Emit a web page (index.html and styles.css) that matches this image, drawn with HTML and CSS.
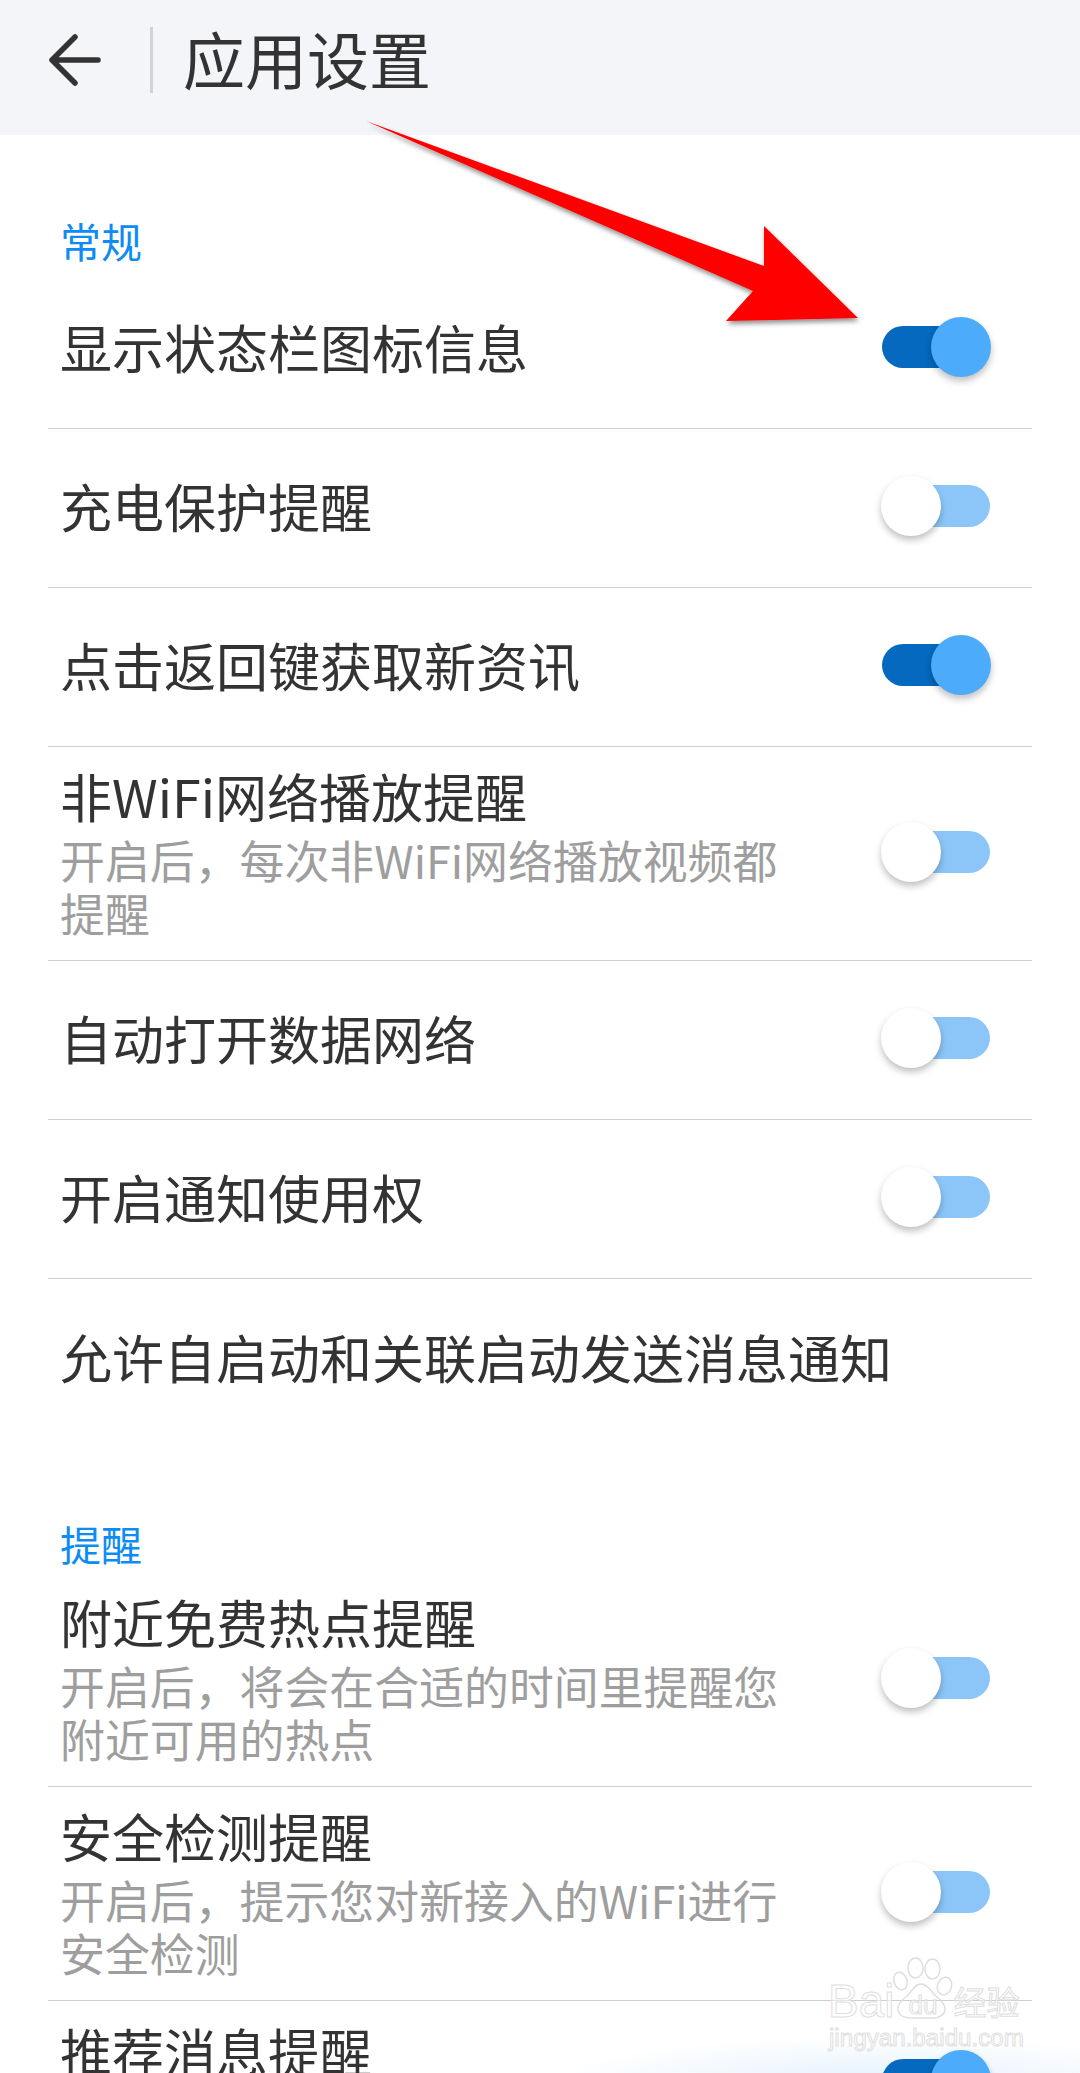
FILE: index.html
```html
<!DOCTYPE html>
<html lang="zh-CN">
<head>
    <meta charset="UTF-8">
    <meta name="viewport" content="width=device-width, initial-scale=1.0">
    <title>应用设置</title>
    <link rel="stylesheet" href="styles.css">
</head>
<body>
    <header class="app-bar">
        <svg class="back-icon" width="52" height="54" viewBox="0 0 52 54">
            <path d="M49 27H4M26 4L3 27L26 50" fill="none" stroke="#333" stroke-width="5.5" stroke-linecap="round" stroke-linejoin="round"/>
        </svg>
        <span class="app-bar-divider"></span>
        <h1 class="app-bar-title">应用设置</h1>
    </header>

    <main class="settings">
        <h2 class="section-label">常规</h2>
        <div class="row">
            <div class="row-text"><div class="row-title">显示状态栏图标信息</div></div>
            <span class="toggle on"></span>
        </div>
        <div class="row">
            <div class="row-text"><div class="row-title">充电保护提醒</div></div>
            <span class="toggle"></span>
        </div>
        <div class="row">
            <div class="row-text"><div class="row-title">点击返回键获取新资讯</div></div>
            <span class="toggle on"></span>
        </div>
        <div class="row row-tall">
            <div class="row-text">
                <div class="row-title">非WiFi网络播放提醒</div>
                <div class="row-sub">开启后，每次非WiFi网络播放视频都提醒</div>
            </div>
            <span class="toggle"></span>
        </div>
        <div class="row">
            <div class="row-text"><div class="row-title">自动打开数据网络</div></div>
            <span class="toggle"></span>
        </div>
        <div class="row">
            <div class="row-text"><div class="row-title">开启通知使用权</div></div>
            <span class="toggle"></span>
        </div>
        <div class="row row-last">
            <div class="row-text row-text-wide"><div class="row-title">允许自启动和关联启动发送消息通知</div></div>
        </div>

        <h2 class="section-label">提醒</h2>
        <div class="row row-tall">
            <div class="row-text">
                <div class="row-title">附近免费热点提醒</div>
                <div class="row-sub">开启后，将会在合适的时间里提醒您附近可用的热点</div>
            </div>
            <span class="toggle"></span>
        </div>
        <div class="row row-tall">
            <div class="row-text">
                <div class="row-title">安全检测提醒</div>
                <div class="row-sub">开启后，提示您对新接入的WiFi进行安全检测</div>
            </div>
            <span class="toggle"></span>
        </div>
        <div class="row row-cut">
            <div class="row-text"><div class="row-title">推荐消息提醒</div></div>
            <span class="toggle on"></span>
        </div>
    </main>

    <!-- red annotation arrow drawn over the screenshot -->
    <svg class="callout-arrow" width="1080" height="400" viewBox="0 0 1080 400">
        <defs>
            <filter id="arrowShadow" x="-10%" y="-10%" width="120%" height="130%">
                <feDropShadow dx="1" dy="3" stdDeviation="2.5" flood-color="#000" flood-opacity="0.45"/>
            </filter>
        </defs>
        <polygon points="366,121 764,266 764,226 858,318 726,321 753,291" fill="#ff0000" filter="url(#arrowShadow)"/>
    </svg>

    <div class="watermark">
        <svg class="watermark-paw" width="64" height="66" viewBox="0 0 64 66">
            <g fill="none" stroke="#dedede" stroke-width="1.5">
                <ellipse cx="10.5" cy="25" rx="6.5" ry="9" transform="rotate(-18 10.5 25)"/>
                <ellipse cx="25.5" cy="12" rx="7.5" ry="10"/>
                <ellipse cx="42.5" cy="13" rx="7.5" ry="10"/>
                <ellipse cx="54.5" cy="30" rx="7" ry="9" transform="rotate(20 54.5 30)"/>
                <path d="M31 28C24 28 22 36 16 41C10 45 8 50 8 53C8 59 14 62 20 62L44 62C50 62 55 58 55 53C55 49 52 45 47 41C41 36 38 28 31 28Z"/>
            </g>
        </svg>
        <div class="watermark-brand"><span class="wm-bai">Bai</span><span class="wm-du">du</span><span class="wm-cn">经验</span></div>
        <div class="watermark-url">jingyan.baidu.com</div>
    </div>
</body>
</html>
```

FILE: styles.css
```css
html, body {
    margin: 0;
    padding: 0;
}
body {
    position: relative;
    width: 1080px;
    height: 2073px;
    overflow: hidden;
    background-color: #fff;
    color: #333;
    font-family: "Noto Sans CJK SC", "Noto Sans", sans-serif;
}

.app-bar {
    display: flex;
    align-items: center;
    height: 135px;
    padding: 0 0 15px 49px;
    box-sizing: border-box;
    background-color: #f4f5f9;
}
.back-icon {
    flex: none;
}
.app-bar-divider {
    width: 3px;
    height: 66px;
    margin-left: 49px;
    margin-right: 30px;
    background-color: #d2d3d6;
}
.app-bar-title {
    margin: 0 0 4px;
    font-size: 62px;
    font-weight: 400;
    line-height: 66px;
}

.settings {
    margin: 0 48px;
}
.section-label {
    height: 135px;
    margin: 0;
    padding: 81px 0 0 12px;
    box-sizing: border-box;
    color: #0d8cf3;
    font-size: 41px;
    font-weight: 400;
    line-height: 48px;
}

.row {
    display: flex;
    align-items: center;
    justify-content: space-between;
    height: 159px;
    padding: 0 42px 4px 12px;
    box-sizing: border-box;
    border-bottom: 1px solid #cfcfd2;
}
.row-tall {
    height: 214px;
}
.row-last {
    border-bottom: none;
}
.row-cut {
    position: relative;
    align-items: flex-start;
    border-bottom: none;
    padding-top: 18px;
}
/* faint touch glow behind the last row */
.row-cut::before {
    content: "";
    position: absolute;
    top: 25px;
    left: 520px;
    right: -48px;
    height: 48px;
    background: radial-gradient(ellipse 330px 46px at 310px 56px, #e4f1fd, rgba(228, 241, 253, 0));
}
.row-cut .toggle {
    margin-top: 40px;
}
.row-text {
    width: 730px;
}
.row-text-wide {
    width: 900px;
}
.row-title {
    font-size: 52px;
    line-height: 64px;
}
.row-sub {
    margin-top: 5px;
    color: #9e9e9e;
    font-size: 44.9px;
    line-height: 53px;
}

.toggle {
    position: relative;
    flex: none;
    width: 108px;
    height: 42px;
    border-radius: 21px;
    background-color: #8cc6f9;
}
/* knob sticks out above and below the track */
.toggle::after {
    content: "";
    position: absolute;
    top: -9px;
    left: -1px;
    width: 60px;
    height: 60px;
    border-radius: 50%;
    background-color: #fff;
    box-shadow: 0 4px 7px rgba(0, 0, 0, 0.25);
}
.toggle.on {
    background-color: #0469bf;
}
.toggle.on::after {
    left: 49px;
    background-color: #4dabfb;
}

.callout-arrow {
    position: absolute;
    top: 0;
    left: 0;
}

.watermark {
    position: absolute;
    top: 1956px;
    left: 828px;
    width: 200px;
    height: 96px;
}
.watermark-paw {
    position: absolute;
    top: 0;
    left: 62px;
}
.watermark-brand {
    position: absolute;
    top: 20px;
    left: 0;
    display: flex;
    align-items: flex-start;
    white-space: nowrap;
    color: rgba(255, 255, 255, 0.5);
    font-family: "Liberation Sans", sans-serif;
    font-size: 46px;
    line-height: 50px;
    -webkit-text-stroke: 1px #dedede;
}
.wm-du {
    margin-left: 14px;
    margin-top: 14px;
    font-size: 26px;
    line-height: 30px;
}
.wm-cn {
    margin-left: 16px;
    margin-top: 2px;
    font-family: "Noto Sans CJK SC", sans-serif;
    font-size: 33px;
    line-height: 46px;
}
.watermark-url {
    position: absolute;
    top: 67px;
    left: 1px;
    color: rgba(255, 255, 255, 0.5);
    font-family: "Liberation Sans", sans-serif;
    font-size: 24.2px;
    line-height: 30px;
    white-space: nowrap;
    -webkit-text-stroke: 1px #e0e0e0;
}
```
